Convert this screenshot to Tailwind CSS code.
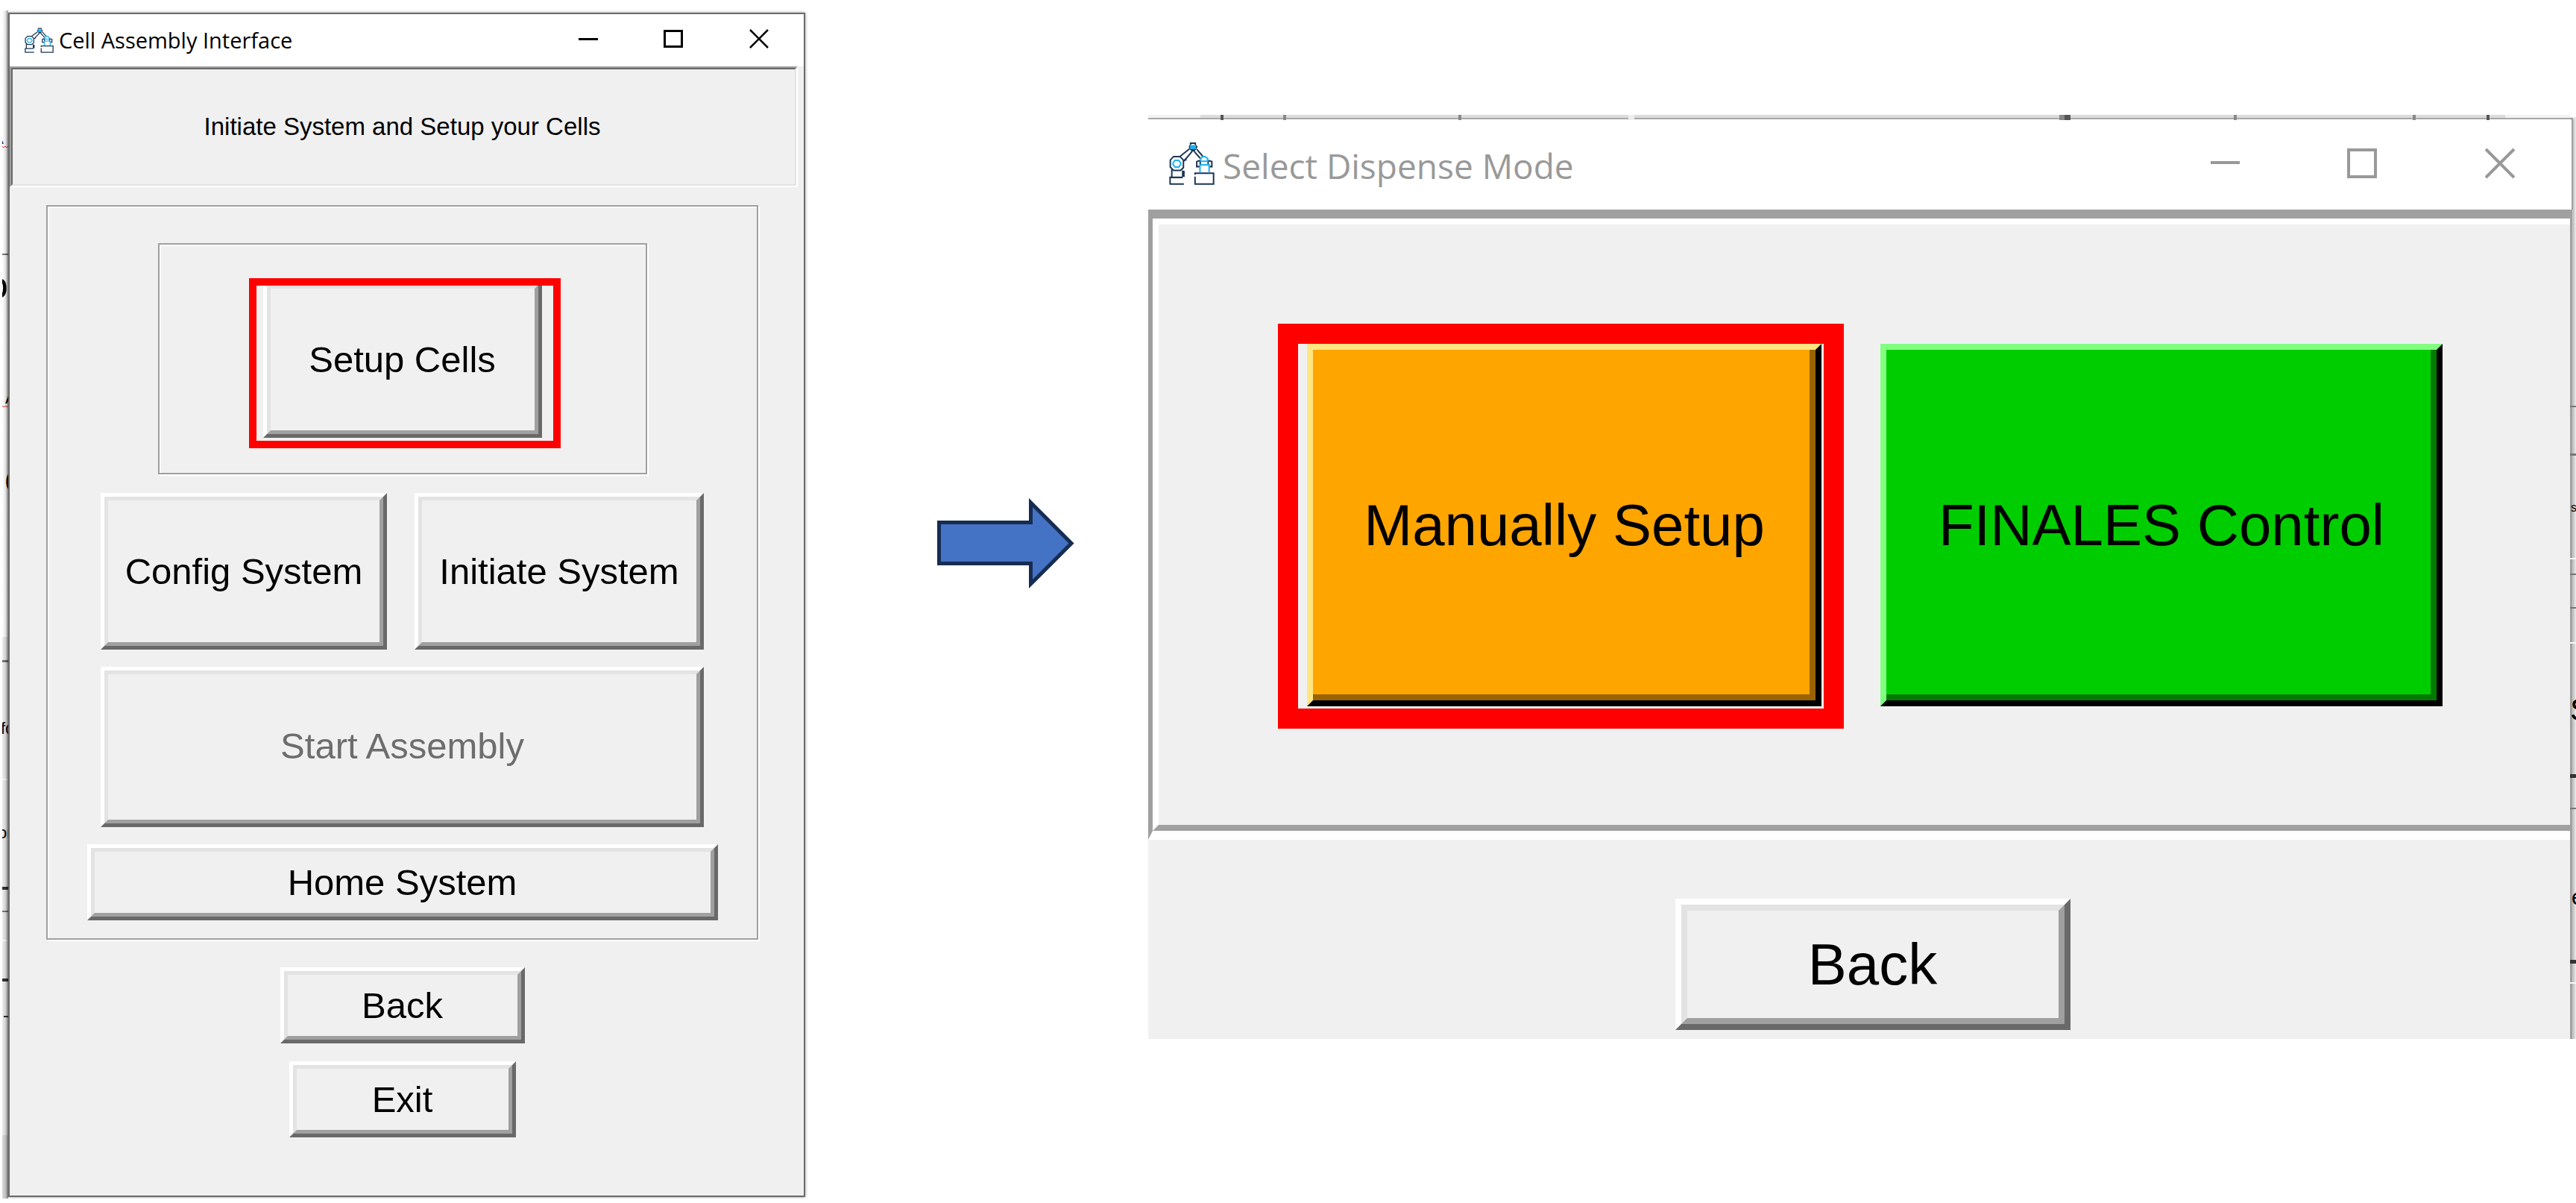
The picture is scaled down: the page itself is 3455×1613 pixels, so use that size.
<!DOCTYPE html>
<html lang="en">
<head>
<meta charset="utf-8">
<title>Cell Assembly Interface</title>
<script src="https://cdn.jsdelivr.net/npm/@tailwindcss/browser@4"></script>
</head>
<body class="bg-white text-black font-['Liberation_Sans',Arial,sans-serif]">
<svg class="hidden" aria-hidden="true">
  <symbol id="robot" viewBox="22 18 184 172" preserveAspectRatio="none">
    <g fill="none" stroke="#1b3654" stroke-width="6">
      <path d="M82 158V134M33 158V128M77 158V132M26 186V160H77M24 186H82M26 158V186"/>
      <path d="M40 77H66L80 91V121L68 132H40L27 119V91Z"/>
      <path d="M67 76L104 47M82 95L115 57M85 86L92 92M124 57L148 84M134 48L160 78"/>
      <path d="M109 30V24H128V30M104 39L109 48H128L134 39L128 31M104 39L109 31M111 54H127"/>
      <path d="M149 92L134 97V117H146M176 92L195 97V117H183M148 92V110M180 92V110"/>
      <path d="M127 149V143H202V186H127V157"/>
    </g>
    <g fill="none" stroke="#1fb0f0" stroke-width="6">
      <path d="M46 92H61L69 103V108L61 119H46L38 108V103ZM110 34H128V45H110ZM112 40H126"/>
      <path d="M149 92L152 82L159 77H168L178 85V94M147 96H181M147 110H184V141M147 110V141"/>
    </g>
  </symbol>
</svg>

<main class="grid grid-cols-[1080fr_460fr_1915fr] items-start">
  <section class="flex items-start pl-[3px] pt-[14px]">
    <svg class="w-2 h-[1593px] shrink-0" viewBox="0 0 8 1593" aria-hidden="true">
      <defs><linearGradient id="fade"><stop offset="0" stop-color="#000" stop-opacity="0"/><stop offset=".6" stop-color="#000" stop-opacity=".12"/><stop offset="1" stop-color="#000" stop-opacity=".4"/></linearGradient></defs>
      <path fill="#ececec" d="M0 840h8v668H0z"/><path fill="#d8d8d8" d="M0 1508h8v85H0z"/>
      <path fill="#777" d="M0 326h8v2H0zM0 871h8v3H0zM0 1207h8v2H0z"/>
      <path fill="#333" d="M0 1175h8v4H0zM0 1298h8v4H0zM2 1348h6v2H2z"/>
      <path fill="#fff" d="M0 1030h8v2H0zM0 1246h8v2H0z"/>
      <path fill="none" stroke="#e33" d="M0 182l2 2 2-2 2 2 2-2M0 530l2 2 2-2 2 2 2-2"/>
      <g font-family="Liberation Sans, sans-serif">
        <text x="-9" y="179" font-size="16">A</text>
        <text x="-20" y="386" font-size="50">o</text>
        <text x="4" y="527" font-size="24">A</text>
        <text x="3" y="648" font-size="46">C</text>
        <text x="-2" y="970" font-size="22">fo</text>
        <text x="-6" y="1110" font-size="22">or</text>
      </g>
      <path fill="url(#fade)" d="M0 0h8v1593H0z"/>
    </svg>
    <div class="mt-[3px] flex-1 border-2 border-[#6b6b6b] bg-[#f0f0f0] shadow-[0_0_4px_rgba(0,0,0,0.4)]">
      <header class="flex h-[70px] items-center bg-white pl-5 pr-[46px] font-['Open_Sans','Noto_Sans',sans-serif]">
        <svg class="h-[34px] w-[39px]" aria-hidden="true"><use href="#robot"/></svg>
        <h1 class="flex-1 pl-[7px] text-[29px] leading-[36px]">Cell Assembly Interface</h1>
        <div class="flex items-center gap-[87px] pb-1">
          <button aria-label="Minimize" class="h-[28px] w-[28px]"><svg viewBox="0 0 28 28" stroke="#000" stroke-width="3"><path d="M2 14.500H28"/></svg></button>
          <button aria-label="Maximize" class="h-[28px] w-[28px]"><svg viewBox="0 0 28 28" fill="none" stroke="#000" stroke-width="3"><path d="M2.500 3.500H25.500V24.500H2.500Z"/></svg></button>
          <button aria-label="Close" class="h-[28px] w-[28px]"><svg viewBox="0 0 28 28" stroke="#000" stroke-width="2.500"><path d="M2 2L26 26M26 2L2 26"/></svg></button>
        </div>
      </header>
      <div class="mr-2 border-2 border-t-[#a0a0a0] border-l-[#a0a0a0] border-r-white border-b-white">
        <p class="border-2 border-t-[#696969] border-l-[#696969] border-r-[#e3e3e3] border-b-[#e3e3e3] py-[57px] pr-1 text-center text-[33px] leading-[40px]">Initiate System and Setup your Cells</p>
      </div>
      <div class="flex flex-col items-center pl-[50px] pr-[52px] pt-[24px] pb-[78px] text-[49px] leading-[56px]">
        <div class="mr-[10px] flex w-full max-w-[955px] flex-col items-center border-2 border-[#a0a0a0] pt-[49px] pb-6 shadow-[2px_2px_0_#fff,inset_2px_2px_0_#fff]">
          <div class="relative flex w-[656px] justify-center border-2 border-[#a0a0a0] pt-[49px] pb-[47px] shadow-[2px_2px_0_#fff,inset_2px_2px_0_#fff]">
            <button class="flex h-[210px] w-[374px] border-[5px] border-t-white border-l-white border-r-[#696969] border-b-[#696969]"><span class="flex h-full w-full items-center justify-center border-[5px] border-t-[#e3e3e3] border-l-[#e3e3e3] border-r-[#a0a0a0] border-b-[#a0a0a0]">Setup Cells</span></button>
            <div class="pointer-events-none absolute top-[45px] left-[120px] h-[228px] w-[418px] border-[10px] border-[#f00]"></div>
          </div>
          <div class="mt-[25px] flex gap-[37px]">
            <button class="flex h-[210px] w-[384px] border-[5px] border-t-white border-l-white border-r-[#696969] border-b-[#696969]"><span class="flex h-full w-full items-center justify-center border-[5px] border-t-[#e3e3e3] border-l-[#e3e3e3] border-r-[#a0a0a0] border-b-[#a0a0a0]">Config System</span></button>
            <button class="flex h-[210px] w-[388px] border-[5px] border-t-white border-l-white border-r-[#696969] border-b-[#696969]"><span class="flex h-full w-full items-center justify-center border-[5px] border-t-[#e3e3e3] border-l-[#e3e3e3] border-r-[#a0a0a0] border-b-[#a0a0a0]">Initiate System</span></button>
          </div>
          <button disabled class="mt-[23px] flex h-[215px] w-[809px] border-[5px] border-t-white border-l-white border-r-[#696969] border-b-[#696969] text-[#6d6d6d]"><span class="flex h-full w-full items-center justify-center border-[5px] border-t-[#e3e3e3] border-l-[#e3e3e3] border-r-[#a0a0a0] border-b-[#a0a0a0] pb-1">Start Assembly</span></button>
          <button class="mt-[23px] flex h-[102px] w-[846px] border-[5px] border-t-white border-l-white border-r-[#696969] border-b-[#696969]"><span class="flex h-full w-full items-center justify-center border-[5px] border-t-[#e3e3e3] border-l-[#e3e3e3] border-r-[#a0a0a0] border-b-[#a0a0a0]">Home System</span></button>
        </div>
        <button class="mt-[37px] mr-[10px] flex h-[102px] w-[328px] border-[5px] border-t-white border-l-white border-r-[#696969] border-b-[#696969]"><span class="flex h-full w-full items-center justify-center border-[5px] border-t-[#e3e3e3] border-l-[#e3e3e3] border-r-[#a0a0a0] border-b-[#a0a0a0]">Back</span></button>
        <button class="mt-6 mr-[10px] flex h-[102px] w-[304px] border-[5px] border-t-white border-l-white border-r-[#696969] border-b-[#696969]"><span class="flex h-full w-full items-center justify-center border-[5px] border-t-[#e3e3e3] border-l-[#e3e3e3] border-r-[#a0a0a0] border-b-[#a0a0a0]">Exit</span></button>
      </div>
    </div>
  </section>

  <div class="flex pl-[177px] pt-[668px]">
    <svg class="h-[122px] w-[184px]" viewBox="0 0 184 122" aria-hidden="true"><path d="M2.500 32.500H125.500V6L180 60.500L125.500 115V87.500H2.500Z" fill="#4472c4" stroke="#172c51" stroke-width="5"/></svg>
  </div>

  <section class="flex items-start pt-[154px]">
    <div class="min-w-0 flex-1 bg-[#f0f0f0]">
      <svg class="block h-[7px] w-full" viewBox="0 0 1907 7" preserveAspectRatio="none" aria-hidden="true">
        <path fill="#dcdcdc" d="M0 0h1907v4H0z"/><path fill="#f2f2f2" d="M0 0h70v4H0zM1820 0h87v4h-87z"/><path fill="#a8a8a8" d="M0 4h1907v2H0z"/><path fill="#fff" d="M0 6h1907v1H0z"/>
        <path fill="#555" d="M97 0h4v7h-4zM1229 0h8v7h-8zM1795 0h4v7h-4z"/>
        <path fill="#888" d="M181 0h4v7h-4zM416 0h4v7h-4zM1222 0h7v7h-7zM1456 0h4v7h-4zM1696 0h4v7h-4z"/>
        <path fill="#eee" d="M644 0h8v7h-8z"/>
      </svg>
      <header class="flex h-[120px] items-center bg-white pb-[4px] pl-7 pr-[73px] font-['Open_Sans','Noto_Sans',sans-serif] text-[#999]">
        <svg class="h-[58px] w-[61px]" aria-hidden="true"><use href="#robot"/></svg>
        <h2 class="flex-1 pl-[11px] pt-[6px] text-[46px] leading-[60px]">Select Dispense Mode</h2>
        <div class="flex items-center gap-[143px]">
          <button aria-label="Minimize" class="h-[42px] w-[42px]"><svg viewBox="0 0 42 42" stroke="currentColor" stroke-width="4"><path d="M3 20H42"/></svg></button>
          <button aria-label="Maximize" class="h-[42px] w-[42px]"><svg viewBox="0 0 42 42" fill="none" stroke="currentColor" stroke-width="4"><path d="M3 3H39V39H3Z"/></svg></button>
          <button aria-label="Close" class="h-[42px] w-[42px]"><svg viewBox="0 0 42 42" stroke="currentColor" stroke-width="4"><path d="M2 2L40 40M40 2L2 40"/></svg></button>
        </div>
      </header>
      <div class="border-t-[12px] border-b-[12px] border-l-[6px] border-t-[#a0a0a0] border-l-[#a0a0a0] border-b-white">
        <div class="flex justify-center gap-[79px] border-t-8 border-b-8 border-l-8 border-t-white border-l-white border-b-[#a0a0a0] pt-40 pb-[159px] pl-7 text-[78px] leading-[88px]">
          <div class="relative">
            <button class="flex h-[486px] w-[690px] border-8 border-t-[#ffe680] border-l-[#ffe680] border-r-black border-b-black bg-[#ffa500]"><span class="flex h-full w-full items-center justify-center border-r-8 border-b-8 border-[#996300] pt-2 pl-2">Manually Setup</span></button>
            <div class="pointer-events-none absolute -top-[27px] -left-[39px] h-[543px] w-[759px] border-[27px] border-[#f00]"></div>
          </div>
          <button class="flex h-[486px] w-[754px] border-8 border-t-[#80ff80] border-l-[#80ff80] border-r-black border-b-black bg-[#00cd00]"><span class="flex h-full w-full items-center justify-center border-r-8 border-b-8 border-[#007b00] pt-2 pl-2">FINALES Control</span></button>
        </div>
      </div>
      <footer class="flex justify-center pt-[79px] pb-3 pl-9 text-[78px] leading-[88px]">
        <button class="flex h-[176px] w-[530px] border-8 border-t-white border-l-white border-r-[#696969] border-b-[#696969]"><span class="flex h-full w-full items-center justify-center border-8 border-t-[#e3e3e3] border-l-[#e3e3e3] border-r-[#a0a0a0] border-b-[#a0a0a0]">Back</span></button>
      </footer>
    </div>
    <svg class="h-[1239px] w-2 shrink-0" viewBox="0 0 8 1239" aria-hidden="true">
      <path fill="#e4e4e4" d="M0 0h8v1239H0z"/><path fill="#c8c8c8" d="M3 6h3v1233H3z"/>
      <path fill="#fff" d="M0 7h2v120H0zM0 0h8v3H0z"/><path fill="#a0a0a0" d="M0 4h4v2H0zM2 4h2v123H2zM0 127h3v1112H0z"/>
      <path fill="#777" d="M0 390h8v2H0zM0 454h8v3H0zM0 615h8v2H0zM0 660h8v2H0zM0 929h8v2H0z"/>
      <path fill="#333" d="M0 884h8v5H0zM0 1133h8v5H0z"/>
      <path fill="#f8f8f8" d="M0 594h8v2H0zM0 707h8v2H0zM0 1163h8v2H0z"/>
      <g font-family="Liberation Sans, sans-serif"><text x="1" y="532" font-size="16">s</text><text x="0" y="812" font-size="42">S</text><text x="2" y="1059" font-size="30">e</text></g>
    </svg>
  </section>
</main>
</body>
</html>
